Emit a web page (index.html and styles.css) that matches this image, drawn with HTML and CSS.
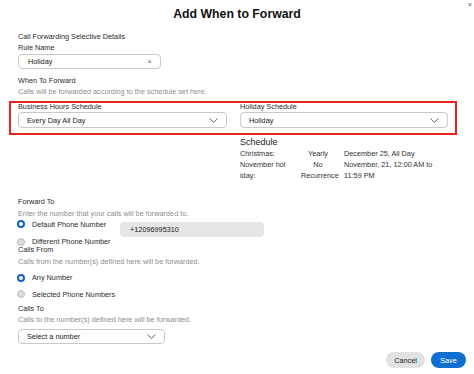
FILE: index.html
```html
<!DOCTYPE html>
<html lang="en">
<head>
<meta charset="utf-8">
<title>Add When to Forward</title>
<link rel="stylesheet" href="styles.css">
</head>
<body>
<div class="dialog">
  <header class="head">
    <h1 class="title">Add When to Forward</h1>
    <span class="close">×</span>
  </header>
  <main class="content">
    <div class="label first">Call Forwarding Selective Details</div>
    <div class="label">Rule Name</div>
    <div class="input rule"><span>Holiday</span><span class="clear">×</span></div>

    <div class="label sec-when">When To Forward</div>
    <div class="desc">Calls will be forwarded according to the schedule set here.</div>

    <div class="sched-grid">
      <div class="highlight"></div>
      <div class="field">
        <div class="flabel">Business Hours Schedule</div>
        <div class="select">
          <span>Every Day All Day</span>
          <svg class="chev" width="9" height="5" viewBox="0 0 9 5"><polyline points="0.5,0.5 4.5,4.3 8.5,0.5" fill="none" stroke="#555" stroke-width="0.9"/></svg>
        </div>
      </div>
      <div class="field">
        <div class="flabel">Holiday Schedule</div>
        <div class="select">
          <span>Holiday</span>
          <svg class="chev" width="9" height="5" viewBox="0 0 9 5"><polyline points="0.5,0.5 4.5,4.3 8.5,0.5" fill="none" stroke="#555" stroke-width="0.9"/></svg>
        </div>
      </div>
      <div class="schedule">
        <div class="sched-title">Schedule</div>
        <div class="sched-table">
          <div class="c1"><span class="nm">Christmas:</span></div>
          <div class="c2">Yearly</div>
          <div class="c3">December 25, All Day</div>
          <div class="c1"><span class="nm">November holiday:</span></div>
          <div class="c2">No Recurrence</div>
          <div class="c3">November, 21, 12:00 AM to 11:59 PM</div>
        </div>
      </div>
    </div>

    <div class="label sec-fwd">Forward To</div>
    <div class="desc d-fwd">Enter the number that your calls will be forwarded to.</div>
    <div class="radio-row r1">
      <div class="radio-opt"><span class="radio on"></span>Default Phone Number</div>
      <div class="numfield">+12096995310</div>
    </div>
    <div class="radio-row r2">
      <div class="radio-opt"><span class="radio off"></span>Different Phone Number</div>
    </div>

    <div class="label sec-from">Calls From</div>
    <div class="desc d-from">Calls from the number(s) defined here will be forwarded.</div>
    <div class="radio-row r3">
      <div class="radio-opt"><span class="radio on"></span>Any Number</div>
    </div>
    <div class="radio-row r4">
      <div class="radio-opt wide"><span class="radio off"></span>Selected Phone Numbers</div>
    </div>

    <div class="label sec-to">Calls To</div>
    <div class="desc">Calls to the number(s) defined here will be forwarded.</div>
    <div class="select small">
      <span>Select a number</span>
      <svg class="chev" width="9" height="5" viewBox="0 0 9 5"><polyline points="0.5,0.5 4.5,4.3 8.5,0.5" fill="none" stroke="#555" stroke-width="0.9"/></svg>
    </div>

    <div class="actions">
      <button class="btn cancel">Cancel</button>
      <button class="btn save">Save</button>
    </div>
  </main>
</div>
</body>
</html>
```

FILE: styles.css
```css
* { box-sizing: border-box; }

html, body {
  margin: 0;
  padding: 0;
  background: #ffffff;
}

body {
  font-family: "Liberation Sans", Arial, Helvetica, sans-serif;
  font-size: 7.3px;
  color: #2b2b2b;
  width: 474px;
  height: 374px;
  overflow: hidden;
}

.dialog {
  position: relative;
  width: 474px;
  height: 374px;
}

.head {
  height: 28px;
  position: relative;
}

.title {
  margin: 0;
  font-size: 12.3px;
  font-weight: bold;
  line-height: 28px;
  text-align: center;
  color: #111;
}

.close {
  position: absolute;
  top: 1px;
  right: 2px;
  font-size: 7px;
  line-height: 8px;
  color: #555;
}

.content {
  padding: 3px 8px 0 18px;
}

.label {
  line-height: 11px;
  color: #2b2b2b;
}

.desc {
  line-height: 11px;
  color: #8e8e8e;
}

.input {
  margin-top: 1px;
  width: 143px;
  height: 15px;
  border: 1px solid #c9c9c9;
  border-radius: 4px;
  display: flex;
  align-items: center;
  justify-content: space-between;
  padding: 0 8px 0 9px;
  color: #222;
}

.clear {
  font-size: 8px;
  color: #666;
}

.sec-when { margin-top: 6px; }

.sched-grid {
  position: relative;
  margin-top: 5px;
  display: grid;
  grid-template-columns: 209px 208px;
  column-gap: 13px;
}

.highlight {
  position: absolute;
  left: -9px;
  top: -1px;
  width: 448px;
  height: 34px;
  border: 2px solid #e8231e;
  pointer-events: none;
}

.flabel {
  line-height: 10px;
  color: #2b2b2b;
}

.select {
  height: 16px;
  border: 1px solid #c9c9c9;
  border-radius: 4px;
  display: flex;
  align-items: center;
  justify-content: space-between;
  padding: 0 8px 0 8px;
  color: #222;
}

.select.small {
  width: 147px;
  height: 15px;
  margin-top: 4.5px;
}

.chev { display: block; }

.schedule {
  grid-column: 2;
}

.sched-title {
  margin-top: 8px;
  font-size: 9px;
  line-height: 12px;
  color: #222;
}

.sched-table {
  display: grid;
  grid-template-columns: 56px 44px 108px;
  line-height: 11px;
  color: #333;
}

.nm {
  display: block;
  width: 46px;
  word-break: break-all;
}

.c2 {
  text-align: center;
  padding: 0 5px;
}

.c3 {
  padding-left: 4px;
}

.sec-fwd {
  margin-top: 14.5px;
}

.d-fwd { margin-top: 1px; }

.radio-row {
  display: flex;
  align-items: flex-start;
}

.radio-opt {
  width: 102px;
  display: flex;
  align-items: center;
  line-height: 11px;
  color: #2b2b2b;
  white-space: nowrap;
}

.radio {
  width: 8px;
  height: 8px;
  border-radius: 50%;
  margin-left: -1px;
  margin-right: 7px;
  flex: none;
}

.radio.on {
  border: 2.5px solid #0d63c9;
  background: #fff;
}

.radio.off {
  border: 1px solid #bdbdbd;
  background: #dcdcdc;
}

.numfield {
  margin-top: 3.5px;
  width: 144px;
  height: 15px;
  line-height: 15px;
  background: #e6e6e6;
  border-radius: 4px;
  padding-left: 10px;
  color: #222;
}

.r2 .radio-opt { line-height: 9px; }

.sec-from { line-height: 8px; }

.d-from { margin-top: 1.5px; }

.r3 { margin-top: 5.5px; }
.r4 { margin-top: 5.5px; }
.radio-opt.wide { width: auto; }

.sec-to { margin-top: 3px; }

.actions {
  margin-top: 8px;
  display: flex;
  justify-content: flex-end;
  gap: 6px;
}

.btn {
  font-family: "Liberation Sans", Arial, Helvetica, sans-serif;
  font-size: 7.3px;
  height: 16px;
  border: none;
  border-radius: 8px;
  padding: 0;
  cursor: pointer;
}

.cancel {
  width: 39px;
  background: #e2e2e2;
  color: #222;
}

.save {
  width: 35px;
  background: #1170cf;
  color: #fff;
}
```
